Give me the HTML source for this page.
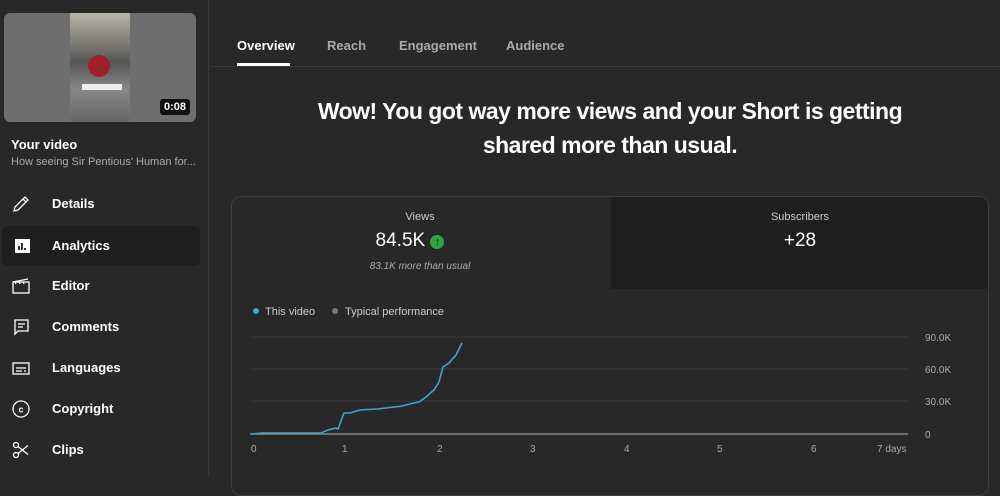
<!DOCTYPE html>
<html><head><meta charset="utf-8"><style>
*{margin:0;padding:0;box-sizing:border-box}
body{width:1000px;height:475px;overflow:hidden;background:#282828;font-family:"Liberation Sans",Arial,sans-serif;color:#fff;position:relative}
.side{position:absolute;left:0;top:0;width:209px;height:475px;background:#282828;border-right:1px solid #3a3a3a}
.thumb{position:absolute;left:4px;top:13px;width:192px;height:109px;background:#6e6e6e;border-radius:6px;overflow:hidden}
.thumb .inner{position:absolute;left:66px;top:0;width:60px;height:109px;background:linear-gradient(#b9b6a8,#555 45%,#888 70%,#666)}
.thumb .dur{position:absolute;right:6px;bottom:7px;background:#111;color:#fff;font-size:11px;font-weight:bold;padding:2px 4px;border-radius:3px}
.yv{position:absolute;left:11px;top:137px;font-size:13px;font-weight:bold}
.sub{position:absolute;left:11px;top:156px;font-size:11px;color:#aaa}
.item{position:absolute;left:0;width:198px;height:40px;font-size:13px;font-weight:bold}
.item span{position:absolute;left:52px;top:12px}
.item svg{position:absolute;left:11px;top:10px}
.act{background:#1f1f1f;border-radius:6px;left:2px}
.tabs{position:absolute;left:237px;top:38px;font-size:13px;font-weight:bold;color:#aaa}
.tabs span{position:absolute;white-space:nowrap}
.hl{position:absolute;left:210px;top:66px;width:790px;height:1px;background:#3a3a3a}
h1{position:absolute;left:210px;top:94px;width:800px;text-align:center;font-size:23px;line-height:34px;letter-spacing:-0.5px}
.card{position:absolute;left:231px;top:196px;width:758px;height:300px;border:1px solid #3e3e3e;border-radius:10px}
.subs{position:absolute;left:611px;top:197px;width:377px;height:92px;background:#1f1f1f;border-top-right-radius:9px}
.t{position:absolute;text-align:center;width:200px}
</style></head><body>
<div class="side">
<div class="thumb"><div class="inner"></div><div style="position:absolute;left:78px;top:71px;width:40px;height:6px;background:#eee"></div><div style="position:absolute;left:84px;top:42px;width:22px;height:22px;border-radius:50%;background:#a0202a"></div><div class="dur">0:08</div></div>
<div class="yv">Your video</div>
<div class="sub">How seeing Sir Pentious' Human for...</div>
<div class="item" style="top:184px"><svg width="20" height="20" viewBox="0 0 20 20" fill="none" stroke="#fff" stroke-width="1.3"><path d="M3 17l1-4L14 3l3 3L7 16z M12 5l3 3"/></svg><span>Details</span></div>
<div class="item act" style="top:226px"><svg width="20" height="20" viewBox="0 0 20 20"><rect x="2" y="3" width="15" height="14" fill="#fff"/><path d="M6 14v-4M9 14V7M12 14v-2" stroke="#000" stroke-width="1.6"/></svg><span style="left:50px">Analytics</span></div>
<div class="item" style="top:266px"><svg width="20" height="20" viewBox="0 0 20 20" fill="none" stroke="#fff" stroke-width="1.3"><rect x="2" y="6" width="16" height="11"/><path d="M2 6l15-3M4 6l1 2M8 6l1 2M12 6l1 2"/></svg><span>Editor</span></div>
<div class="item" style="top:307px"><svg width="20" height="20" viewBox="0 0 20 20" fill="none" stroke="#fff" stroke-width="1.3"><path d="M4 3h13v11H7l-3 3z M7 7h7M7 10h5"/></svg><span>Comments</span></div>
<div class="item" style="top:348px"><svg width="20" height="20" viewBox="0 0 20 20" fill="none" stroke="#fff" stroke-width="1.3"><rect x="2" y="5" width="16" height="11"/><path d="M5 10h10M5 13h6M13 13h2"/></svg><span>Languages</span></div>
<div class="item" style="top:389px"><svg width="20" height="20" viewBox="0 0 20 20" fill="none" stroke="#fff" stroke-width="1.3"><circle cx="10" cy="10" r="8"/><text x="10" y="13.5" font-size="9" font-family="Liberation Sans" fill="#fff" stroke="none" text-anchor="middle" font-weight="bold">c</text></svg><span>Copyright</span></div>
<div class="item" style="top:430px"><svg width="20" height="20" viewBox="0 0 20 20" fill="none" stroke="#fff" stroke-width="1.3"><circle cx="5" cy="5" r="2.5"/><circle cx="5" cy="15" r="2.5"/><path d="M7 6.5l10 8M7 13.5l10-8"/></svg><span>Clips</span></div>
</div>
<div class="tabs"><span style="left:0;color:#fff">Overview</span><span style="left:90px">Reach</span><span style="left:162px">Engagement</span><span style="left:269px">Audience</span></div>
<div style="position:absolute;left:237px;top:63px;width:53px;height:3px;background:#fff"></div>
<div class="hl"></div>
<h1>Wow! You got way more views and your Short is getting<br>shared more than usual.</h1>
<div class="card"></div>
<div class="subs"></div>
<div class="t" style="left:320px;top:211px;font-size:11px;color:#ccc">Views</div>
<div class="t" style="left:310px;top:230px;font-size:19px">84.5K <span style="display:inline-block;width:14px;height:14px;border-radius:50%;background:#2ba640;vertical-align:1px;font-size:11px;line-height:14px;font-weight:bold;color:#111">↑</span></div>
<div class="t" style="left:320px;top:261px;font-size:10px;color:#aaa;font-style:italic">83.1K more than usual</div>
<div class="t" style="left:700px;top:211px;font-size:11px;color:#ccc">Subscribers</div>
<div class="t" style="left:700px;top:230px;font-size:19px">+28</div>
<svg style="position:absolute;left:0;top:0" width="1000" height="475">
<circle cx="256" cy="311" r="3" fill="#3ea6cf"/><text x="265" y="315" font-size="11" fill="#ccc" font-family="Liberation Sans">This video</text>
<circle cx="335" cy="311" r="3" fill="#777"/><text x="345" y="315" font-size="11" fill="#ccc" font-family="Liberation Sans">Typical performance</text>
<g stroke="#3a3a3a" stroke-width="1"><line x1="250" y1="337" x2="908" y2="337"/><line x1="250" y1="369" x2="908" y2="369"/><line x1="250" y1="401" x2="908" y2="401"/></g>
<line x1="250" y1="434" x2="908" y2="434" stroke="#888" stroke-width="1.5"/>
<polyline fill="none" stroke="#3ea6cf" stroke-width="1.6" points="252,434 262,433 321,433 328,430 336,428 338,429 344,413 350,413 360,410 377,409 402,406 414,403 419,402 426,397 434,390 439,382 443,367 449,363 456,355 462,343"/>
<g font-size="10" fill="#aaa" font-family="Liberation Sans"><text x="925" y="341">90.0K</text><text x="925" y="373">60.0K</text><text x="925" y="405">30.0K</text><text x="925" y="438">0</text>
<text x="251" y="452">0</text><text x="342" y="452">1</text><text x="437" y="452">2</text><text x="530" y="452">3</text><text x="624" y="452">4</text><text x="717" y="452">5</text><text x="811" y="452">6</text><text x="877" y="452">7 days</text></g>
</svg>
</body></html>
